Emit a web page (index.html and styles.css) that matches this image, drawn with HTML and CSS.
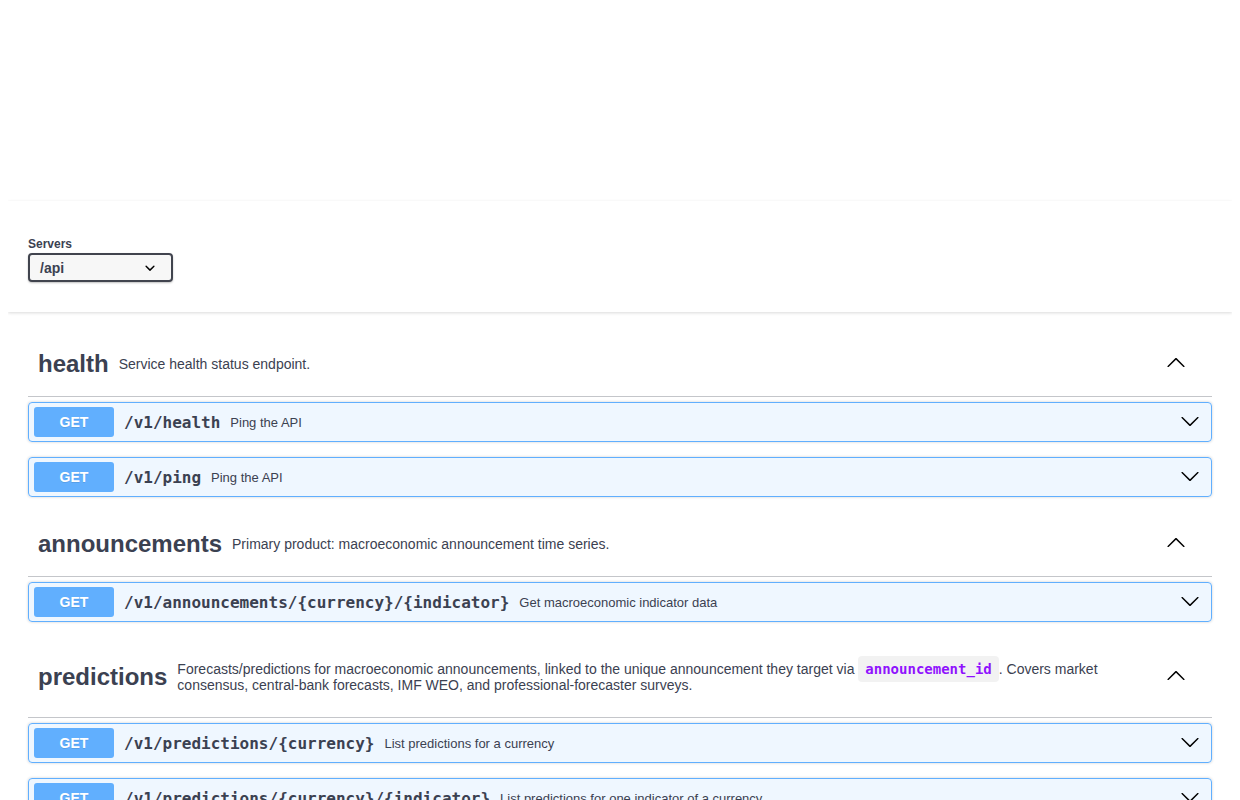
FILE: index.html
```html
<!DOCTYPE html>
<html lang="en">
<head>
  <meta charset="UTF-8">
  <meta name="viewport" content="width=device-width, initial-scale=1.0">
  <title>API docs</title>
  <link rel="stylesheet" href="styles.css">
</head>
<body>
  <div class="info-space"></div>

  <div class="scheme-container">
    <div class="wrapper">
      <div class="servers-title">Servers</div>
      <div class="servers-select">
        <span>/api</span>
        <svg class="select-arrow" viewBox="0 0 20 20" width="20" height="20"><path d="M13.418 7.859a.695.695 0 0 1 .978 0 .68.68 0 0 1 0 .969l-3.908 3.83a.697.697 0 0 1-.979 0l-3.908-3.830a.68.68 0 0 1 0-.969.695.695 0 0 1 .978 0L10 11l3.418-3.141z"/></svg>
      </div>
    </div>
  </div>

  <div class="wrapper">
    <!-- health -->
    <div class="tag-section">
      <h3 class="opblock-tag">
        <span class="tag-name">health</span>
        <small class="tag-desc"><p>Service health status endpoint.</p></small>
        <svg class="arrow up" viewBox="0 0 20 20" width="20" height="20"><path d="M17.418 6.109c.272-.268.709-.268.979 0s.271.701 0 .969l-7.908 7.83c-.27.268-.707.268-.979 0l-7.908-7.83c-.27-.268-.27-.701 0-.969.271-.268.709-.268.979 0L10 13.25l7.418-7.141z"/></svg>
      </h3>
      <div class="opblock">
        <span class="method">GET</span>
        <span class="path">/v1/health</span>
        <span class="summary">Ping the API</span>
        <svg class="arrow" viewBox="0 0 20 20" width="20" height="20"><path d="M17.418 6.109c.272-.268.709-.268.979 0s.271.701 0 .969l-7.908 7.83c-.27.268-.707.268-.979 0l-7.908-7.830c-.27-.268-.27-.701 0-.969.271-.268.709-.268.979 0L10 13.25l7.418-7.141z"/></svg>
      </div>
      <div class="opblock">
        <span class="method">GET</span>
        <span class="path">/v1/ping</span>
        <span class="summary">Ping the API</span>
        <svg class="arrow" viewBox="0 0 20 20" width="20" height="20"><path d="M17.418 6.109c.272-.268.709-.268.979 0s.271.701 0 .969l-7.908 7.83c-.27.268-.707.268-.979 0l-7.908-7.830c-.27-.268-.27-.701 0-.969.271-.268.709-.268.979 0L10 13.25l7.418-7.141z"/></svg>
      </div>
    </div>

    <!-- announcements -->
    <div class="tag-section">
      <h3 class="opblock-tag">
        <span class="tag-name">announcements</span>
        <small class="tag-desc"><p>Primary product: macroeconomic announcement time series.</p></small>
        <svg class="arrow up" viewBox="0 0 20 20" width="20" height="20"><path d="M17.418 6.109c.272-.268.709-.268.979 0s.271.701 0 .969l-7.908 7.83c-.27.268-.707.268-.979 0l-7.908-7.83c-.27-.268-.27-.701 0-.969.271-.268.709-.268.979 0L10 13.25l7.418-7.141z"/></svg>
      </h3>
      <div class="opblock">
        <span class="method">GET</span>
        <span class="path">/v1/announcements/{currency}/{indicator}</span>
        <span class="summary">Get macroeconomic indicator data</span>
        <svg class="arrow" viewBox="0 0 20 20" width="20" height="20"><path d="M17.418 6.109c.272-.268.709-.268.979 0s.271.701 0 .969l-7.908 7.83c-.27.268-.707.268-.979 0l-7.908-7.830c-.27-.268-.27-.701 0-.969.271-.268.709-.268.979 0L10 13.25l7.418-7.141z"/></svg>
      </div>
    </div>

    <!-- predictions -->
    <div class="tag-section">
      <h3 class="opblock-tag">
        <span class="tag-name">predictions</span>
        <small class="tag-desc"><p>Forecasts/predictions for macroeconomic announcements, linked to the unique announcement they target via <code>announcement_id</code>. Covers market consensus, central-bank forecasts, IMF WEO, and professional-forecaster surveys.</p></small>
        <svg class="arrow up" viewBox="0 0 20 20" width="20" height="20"><path d="M17.418 6.109c.272-.268.709-.268.979 0s.271.701 0 .969l-7.908 7.83c-.27.268-.707.268-.979 0l-7.908-7.83c-.27-.268-.27-.701 0-.969.271-.268.709-.268.979 0L10 13.25l7.418-7.141z"/></svg>
      </h3>
      <div class="opblock">
        <span class="method">GET</span>
        <span class="path">/v1/predictions/{currency}</span>
        <span class="summary">List predictions for a currency</span>
        <svg class="arrow" viewBox="0 0 20 20" width="20" height="20"><path d="M17.418 6.109c.272-.268.709-.268.979 0s.271.701 0 .969l-7.908 7.83c-.27.268-.707.268-.979 0l-7.908-7.830c-.27-.268-.27-.701 0-.969.271-.268.709-.268.979 0L10 13.25l7.418-7.141z"/></svg>
      </div>
      <div class="opblock">
        <span class="method">GET</span>
        <span class="path">/v1/predictions/{currency}/{indicator}</span>
        <span class="summary">List predictions for one indicator of a currency</span>
        <svg class="arrow" viewBox="0 0 20 20" width="20" height="20"><path d="M17.418 6.109c.272-.268.709-.268.979 0s.271.701 0 .969l-7.908 7.83c-.27.268-.707.268-.979 0l-7.908-7.830c-.27-.268-.27-.701 0-.969.271-.268.709-.268.979 0L10 13.25l7.418-7.141z"/></svg>
      </div>
    </div>
  </div>
</body>
</html>
```

FILE: styles.css
```css
body {
  margin: 8px;
  background: #fff;
  font-family: "Liberation Sans", Arial, sans-serif;
  color: #3b4151;
}

.info-space {
  height: 193px;
}

.wrapper {
  padding: 0 20px;
}

/* Servers box */
.scheme-container {
  background: #fff;
  box-shadow: 0 1px 3px 0 rgba(0, 0, 0, 0.15);
  padding: 30px 0;
  margin: 0 0 20px;
}

.servers-title {
  font-size: 12px;
  font-weight: 700;
  height: 22px;
  line-height: 26px;
}

.servers-select {
  box-sizing: border-box;
  width: 145px;
  height: 29px;
  display: flex;
  align-items: center;
  justify-content: space-between;
  padding: 0 11px 0 10px;
  border: 2px solid #41444e;
  border-radius: 4px;
  background: #f7f7f7;
  box-shadow: 0 1px 2px 0 rgba(0, 0, 0, 0.25);
  font-size: 14px;
  font-weight: 700;
  color: #3b4151;
}

.select-arrow {
  fill: #000;
}

/* Tag sections */
.opblock-tag {
  display: flex;
  align-items: center;
  margin: 0 0 5px;
  padding: 10px 20px 10px 10px;
  min-height: 44px;
  border-bottom: 1px solid rgba(59, 65, 81, 0.3);
  font-size: 24px;
  font-weight: 700;
  color: #3b4151;
}

.tag-desc {
  flex: 1;
  padding: 0 10px;
  font-size: 14px;
  font-weight: 400;
  line-height: 16px;
}

.tag-desc p {
  margin: 14px 0;
}

.tag-desc code {
  background: rgba(0, 0, 0, 0.05);
  border-radius: 4px;
  color: #9012fe;
  font-family: "DejaVu Sans Mono", monospace;
  font-size: 14px;
  font-weight: 600;
  padding: 5px 7px;
}

.arrow {
  flex: none;
  fill: #000;
}

.opblock-tag .arrow {
  margin: -2px 6px 0 16px;
}

.arrow.up {
  transform: rotate(180deg);
}

/* Operations */
.opblock {
  display: flex;
  align-items: center;
  height: 38px;
  padding: 0 5px;
  margin: 0 0 15px;
  border: 1px solid #61affe;
  border-radius: 4px;
  background: rgba(97, 175, 254, 0.1);
  box-shadow: 0 0 3px rgba(0, 0, 0, 0.19);
}

.method {
  min-width: 80px;
  padding: 6px 0;
  border-radius: 3px;
  background: #61affe;
  color: #fff;
  font-size: 14px;
  font-weight: 700;
  line-height: 18px;
  text-align: center;
  text-shadow: 0 1px 0 rgba(0, 0, 0, 0.1);
}

.path {
  padding: 0 10px;
  font-family: "DejaVu Sans Mono", monospace;
  font-size: 16px;
  font-weight: 600;
  color: #3b4151;
}

.summary {
  flex: 1;
  font-size: 13px;
  color: #3b4151;
}

.opblock .arrow {
  margin: -2px 6px 0 10px;
}
```
